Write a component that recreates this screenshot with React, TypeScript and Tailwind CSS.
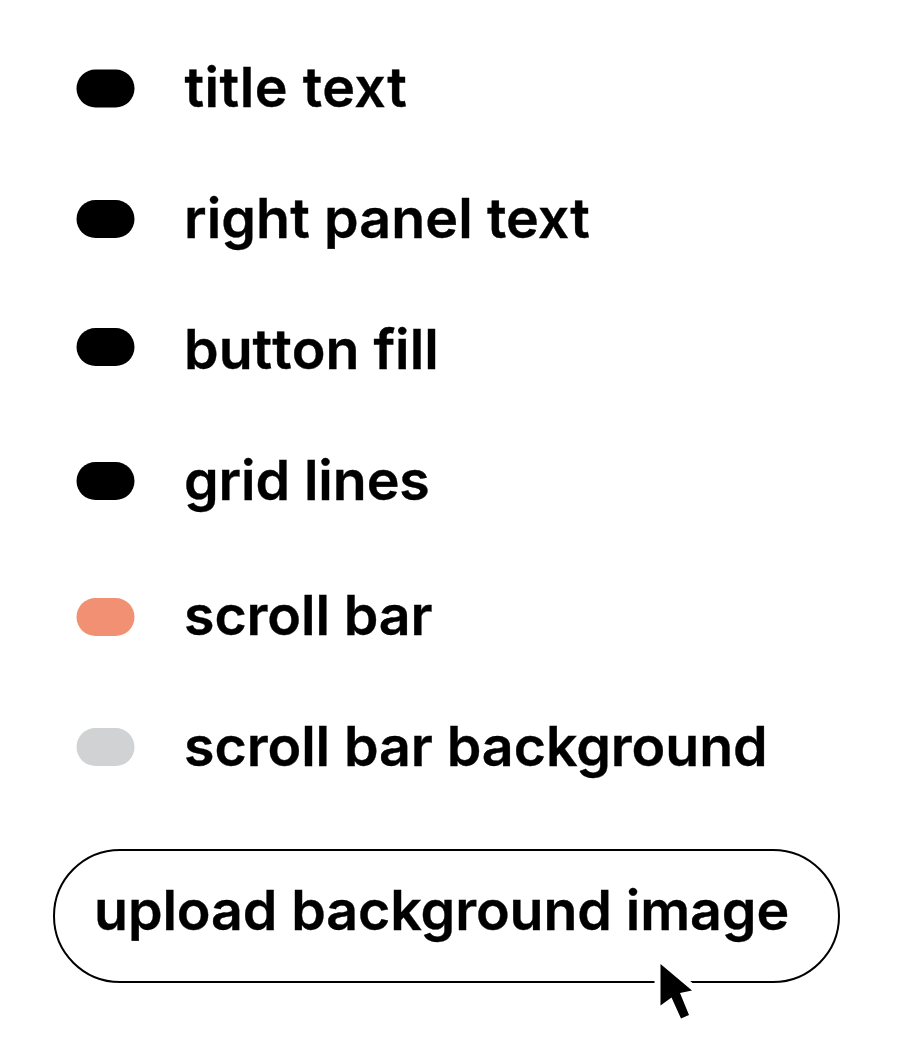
const rows = [
  { label: "title text", swatch: "bg-black translate-y-[0.5px]", row: "mt-[69px]", text: "top-[-1px] left-[0.5px] tracking-[0.5px]" },
  { label: "right panel text", swatch: "bg-black", row: "mt-[93px]", text: "top-[-1.5px] tracking-[0.1px]" },
  { label: "button fill", swatch: "bg-black", row: "mt-[90px]", text: "top-[1.5px] [font-kerning:none]" },
  { label: "grid lines", swatch: "bg-black", row: "mt-[96px]", text: "top-[-1.5px] tracking-[-0.1px]" },
  { label: "scroll bar", swatch: "bg-[#f29073]", row: "mt-[98px]", text: "top-[-2px] tracking-[-0.1px]" },
  { label: "scroll bar background", swatch: "bg-[#d0d2d3]", row: "mt-[92px]", text: "top-[-1.5px] tracking-[-0.07px]" },
];

export default function App() {
  return (
    <main className="flex h-[1061px] w-[897px] flex-col overflow-hidden bg-white font-['Inter',sans-serif] text-[55.5px] font-semibold leading-none text-black [-webkit-text-stroke:0.35px_black]">
      <div className="flex flex-col pl-[76px]">
        {rows.map((r) => (
          <div key={r.label} className={`flex h-[38px] items-center gap-[50px] ${r.row}`}>
            <span className={`h-[38px] w-[58px] shrink-0 translate-x-[0.5px] rounded-full ${r.swatch}`} />
            <span className={`relative whitespace-nowrap ${r.text}`}>{r.label}</span>
          </div>
        ))}
      </div>
      <button className="relative ml-[52.5px] mt-[83px] flex h-[134px] w-[787px] shrink-0 items-center rounded-full border-2 border-black bg-white pl-[39.5px]">
        <span className="whitespace-nowrap pb-[13px] tracking-[-0.1px]">upload background image</span>
        <svg className="absolute left-[600.5px] top-[106px] overflow-visible" width="50" height="66" viewBox="0 0 50 66">
          <path d="M5.5 7V48.5L16.5 40.5L26 61.5L34 58L25 36L37 33.5Z" fill="black" stroke="white" strokeWidth="12" paintOrder="stroke" />
        </svg>
      </button>
    </main>
  );
}
